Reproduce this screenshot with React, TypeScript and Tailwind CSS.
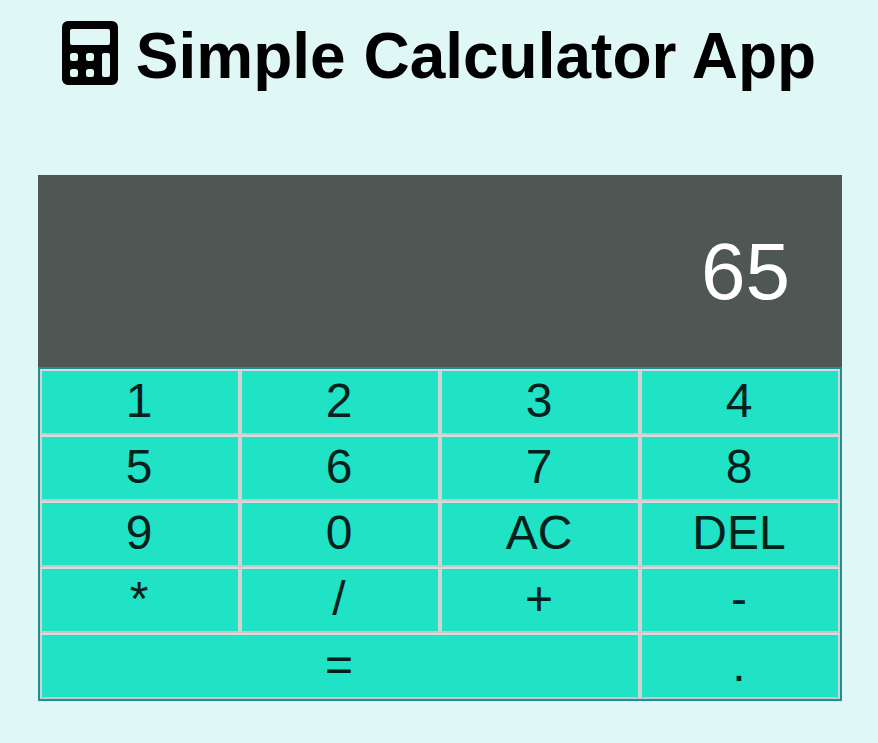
const keys = [
  { label: "1" },
  { label: "2" },
  { label: "3" },
  { label: "4" },
  { label: "5" },
  { label: "6" },
  { label: "7" },
  { label: "8" },
  { label: "9" },
  { label: "0" },
  { label: "AC" },
  { label: "DEL" },
  { label: "*" },
  { label: "/" },
  { label: "+" },
  { label: "-" },
];

function CalculatorIcon() {
  return (
    <svg width="56" height="64" viewBox="0 0 56 64" className="shrink-0">
      <path
        fillRule="evenodd"
        fill="#000"
        d="M6 0H50A6 6 0 0 1 56 6V58A6 6 0 0 1 50 64H6A6 6 0 0 1 0 58V6A6 6 0 0 1 6 0ZM10 8A2 2 0 0 0 8 10V22A2 2 0 0 0 10 24H46A2 2 0 0 0 48 22V10A2 2 0 0 0 46 8ZM10.5 32A2.5 2.5 0 0 0 8 34.5V37.5A2.5 2.5 0 0 0 10.5 40H13.5A2.5 2.5 0 0 0 16 37.5V34.5A2.5 2.5 0 0 0 13.5 32ZM26.5 32A2.5 2.5 0 0 0 24 34.5V37.5A2.5 2.5 0 0 0 26.5 40H29.5A2.5 2.5 0 0 0 32 37.5V34.5A2.5 2.5 0 0 0 29.5 32ZM10.5 48A2.5 2.5 0 0 0 8 50.5V53.5A2.5 2.5 0 0 0 10.5 56H13.5A2.5 2.5 0 0 0 16 53.5V50.5A2.5 2.5 0 0 0 13.5 48ZM26.5 48A2.5 2.5 0 0 0 24 50.5V53.5A2.5 2.5 0 0 0 26.5 56H29.5A2.5 2.5 0 0 0 32 53.5V50.5A2.5 2.5 0 0 0 29.5 48ZM42 32A2 2 0 0 0 40 34V54A2 2 0 0 0 42 56H46A2 2 0 0 0 48 54V34A2 2 0 0 0 46 32Z"
      />
    </svg>
  );
}

export default function App() {
  return (
    <div className="min-h-[743px] bg-[#e0f8f5] font-['Liberation_Sans',Arial,sans-serif] px-[38px] pt-[12px]">
      <h1 className="flex items-center justify-center gap-[18px] text-[64px] leading-[80px] font-bold text-black h-[82px]">
        <CalculatorIcon />
        <span className="pt-[6px]">Simple Calculator App</span>
      </h1>

      <div className="mt-[81px] w-[804px]">
        <div className="h-[192px] bg-[#4f5755] text-white text-[80px] flex items-center justify-end pr-[52px] pt-[2px]">
          65
        </div>
        <div className="grid grid-cols-4 border-2 border-[#1a9099]">
          {keys.map((key) => (
            <button
              key={key.label}
              className="h-[66px] bg-[#20e3c5] border-2 border-t-[#dadada] border-b-[#c6c6c6] border-x-[#d2d2d2] text-[48px] leading-[56px] text-[#02201c] flex justify-center items-start pt-[2px] pr-[2px]"
            >
              {key.label}
            </button>
          ))}
          <button className="col-span-3 h-[66px] bg-[#20e3c5] border-2 border-t-[#dadada] border-b-[#c6c6c6] border-x-[#d2d2d2] text-[48px] leading-[56px] text-[#02201c] flex justify-center items-start pt-[2px] pr-[2px]">
            =
          </button>
          <button className="h-[66px] bg-[#20e3c5] border-2 border-t-[#dadada] border-b-[#c6c6c6] border-x-[#d2d2d2] text-[48px] leading-[56px] text-[#02201c] flex justify-center items-start pt-[2px] pr-[2px]">
            .
          </button>
        </div>
      </div>
    </div>
  );
}
